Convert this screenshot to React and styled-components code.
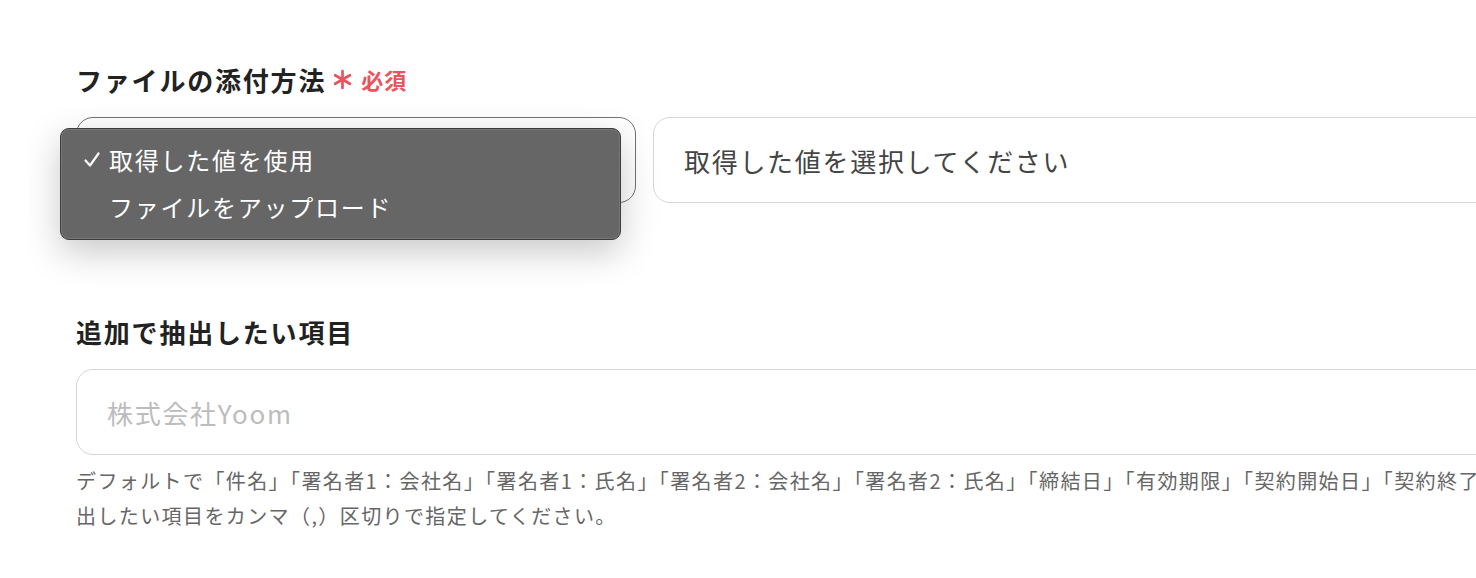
import React from "react";
import styled, { createGlobalStyle } from "styled-components";

const GlobalStyle = createGlobalStyle`
  body {
    margin: 0;
    background: #fff;
    overflow: hidden;
    font-family: "Noto Sans CJK JP", "Noto Sans", sans-serif;
  }
`;

const Page = styled.div`
  width: 1700px;
  padding: 61px 0 40px 76px;
  box-sizing: border-box;
`;

const Section = styled.section`
  margin-bottom: ${(p) => p.gap || 0}px;
`;

const Label = styled.div`
  display: flex;
  align-items: center;
  height: 36px;
  margin-bottom: 20px;
  font-size: 26px;
  font-weight: 700;
  letter-spacing: 1.8px;
  color: #222;
`;

const Required = styled.span`
  display: inline-flex;
  align-items: center;
  margin-left: 6px;
  color: #e9545e;
  font-size: 22px;
  letter-spacing: 1px;
  svg {
    margin-right: 8px;
  }
`;

const Row = styled.div`
  display: flex;
  gap: 17px;
`;

const SelectWrap = styled.div`
  position: relative;
  flex: 0 0 560px;
`;

const SelectBox = styled.div`
  height: 86px;
  box-sizing: border-box;
  border: 1.5px solid #727272;
  border-radius: 17px;
  background: #fff;
`;

const Menu = styled.ul`
  position: absolute;
  left: -16px;
  top: 11px;
  width: 561px;
  height: 112px;
  box-sizing: border-box;
  margin: 0;
  padding: 7px 0 0;
  list-style: none;
  background: #666;
  border: 1px solid #3c3c3c;
  border-radius: 9px;
  box-shadow: inset 0 0 0 1px rgba(255, 255, 255, 0.12),
    0 12px 36px rgba(0, 0, 0, 0.22);
`;

const MenuItem = styled.li`
  display: flex;
  align-items: center;
  height: 47px;
  padding-left: 22px;
  color: #fff;
  font-size: 24px;
  letter-spacing: 1.75px;
`;

const Check = styled.span`
  display: inline-flex;
  width: 26px;
  visibility: ${(p) => (p.on ? "visible" : "hidden")};
`;

const Field = styled.div`
  flex: ${(p) => (p.grow ? "1" : "none")};
  width: ${(p) => (p.grow ? "auto" : "1600px")};
  height: 86px;
  box-sizing: border-box;
  display: flex;
  align-items: center;
  padding-left: 30px;
  border: 1.5px solid #d3d7db;
  border-radius: 17px;
  background: #fff;
  font-size: 26px;
  letter-spacing: 1.7px;
  color: ${(p) => (p.placeholder ? "#bcbcbc" : "#444")};
`;

const Help = styled.p`
  margin: 8px 0 0;
  font-size: 20px;
  line-height: 35px;
  letter-spacing: 1.4px;
  color: #666;
  white-space: nowrap;
`;

const CheckIcon = () => (
  <svg width="18" height="18" viewBox="0 0 18 18">
    <path
      d="M2.5 9.5 L7 14.5 L15.5 2.5"
      fill="none"
      stroke="#fff"
      strokeWidth="2.2"
      strokeLinecap="round"
      strokeLinejoin="round"
    />
  </svg>
);

const Asterisk = () => (
  <svg width="21" height="21" viewBox="0 0 20 20">
    <g stroke="#e9545e" strokeWidth="2.6" strokeLinecap="round">
      <line x1="10" y1="2" x2="10" y2="18" />
      <line x1="3" y1="6" x2="17" y2="14" />
      <line x1="3" y1="14" x2="17" y2="6" />
    </g>
  </svg>
);

const options = [
  { label: "取得した値を使用", selected: true },
  { label: "ファイルをアップロード", selected: false },
];

export default function App() {
  return (
    <Page>
      <GlobalStyle />
      <Section gap={110}>
        <Label>
          ファイルの添付方法
          <Required>
            <Asterisk />
            必須
          </Required>
        </Label>
        <Row>
          <SelectWrap>
            <SelectBox />
            <Menu>
              {options.map((o) => (
                <MenuItem key={o.label}>
                  <Check on={o.selected}>
                    <CheckIcon />
                  </Check>
                  {o.label}
                </MenuItem>
              ))}
            </Menu>
          </SelectWrap>
          <Field grow>取得した値を選択してください</Field>
        </Row>
      </Section>
      <Section>
        <Label>追加で抽出したい項目</Label>
        <Field placeholder>株式会社Yoom</Field>
        <Help>
          デフォルトで「件名」「署名者1：会社名」「署名者1：氏名」「署名者2：会社名」「署名者2：氏名」「締結日」「有効期限」「契約開始日」「契約終了日」以外に抽
          <br />
          出したい項目をカンマ（,）区切りで指定してください。
        </Help>
      </Section>
    </Page>
  );
}
